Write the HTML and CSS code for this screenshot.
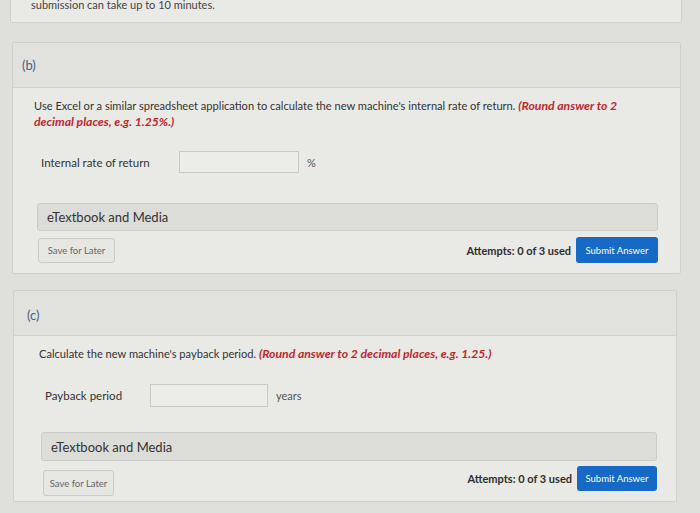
FILE: index.html
```html
<!DOCTYPE html>
<html>
<head>
<meta charset="utf-8">
<link rel="stylesheet" href="styles.css">
</head>
<body>
<div class="page">
  <div class="card card-top">
    <p class="top-note">submission can take up to 10 minutes.</p>
  </div>

  <div class="card card-b">
    <div class="card-head"><span class="part">(b)</span></div>
    <div class="card-body">
      <p class="question">Use Excel or a similar spreadsheet application to calculate the new machine's internal rate of return. <em class="hint">(Round answer to 2 decimal places, e.g. 1.25%.)</em></p>
      <div class="answer-row">
        <span class="label label-b">Internal rate of return</span>
        <span class="input input-b"></span>
        <span class="unit">%</span>
      </div>
      <div class="media">eTextbook and Media</div>
      <div class="actions">
        <button class="btn-save">Save for Later</button>
        <div class="submit-group">
          <span class="attempts">Attempts: 0 of 3 used</span>
          <button class="btn-submit">Submit Answer</button>
        </div>
      </div>
    </div>
  </div>

  <div class="card card-c">
    <div class="card-head"><span class="part">(c)</span></div>
    <div class="card-body">
      <p class="question">Calculate the new machine's payback period. <em class="hint">(Round answer to 2 decimal places, e.g. 1.25.)</em></p>
      <div class="answer-row">
        <span class="label label-c">Payback period</span>
        <span class="input input-c"></span>
        <span class="unit">years</span>
      </div>
      <div class="media">eTextbook and Media</div>
      <div class="actions">
        <button class="btn-save">Save for Later</button>
        <div class="submit-group">
          <span class="attempts">Attempts: 0 of 3 used</span>
          <button class="btn-submit">Submit Answer</button>
        </div>
      </div>
    </div>
  </div>
</div>
</body>
</html>
```

FILE: styles.css
```css
html, body {
  margin: 0;
  padding: 0;
}
body {
  background: #dfdfdb;
  font-family: Lato, "Open Sans", sans-serif;
  color: #3a3a3a;
  width: 700px;
  height: 513px;
  overflow: hidden;
}
.page {
  display: flex;
  flex-direction: column;
}
.card {
  background: #e9e9e5;
  border: 1px solid #cfcfcb;
  border-radius: 2px;
  box-sizing: border-box;
}
.card-top {
  margin: -4px 18px 0 10px;
  height: 27px;
  padding: 1px 0 0 20px;
  display: flex;
  align-items: flex-start;
}
.top-note {
  margin: 0;
  font-size: 11px;
  line-height: 14px;
  color: #444;
}
.card-b {
  margin: 19px 19px 0 12px;
}
.card-c {
  margin: 16px 23px 0 13px;
}
.card-head {
  background: #e1e1dd;
  border-bottom: 1px solid #d2d2ce;
  height: 45px;
  box-sizing: border-box;
  display: flex;
  align-items: center;
}
.card-b .card-head { padding-left: 9px; }
.card-c .card-head { padding-left: 13px; padding-top: 4px; }
.part {
  font-size: 13px;
  color: #4a5f86;
}
.card-body {
  display: flex;
  flex-direction: column;
}
.card-b .card-body { padding: 10px 22px 10px 21px; }
.card-c .card-body { padding: 10px 19px 5px 25px; }
.question {
  margin: 0;
  font-size: 11.1px;
  line-height: 16px;
  color: #333;
  max-width: 600px;
}
.hint {
  color: #c2262d;
  font-weight: 700;
  font-style: italic;
  font-size: 12.2px;
}
.answer-row {
  display: flex;
  align-items: center;
}
.card-b .answer-row { margin: 21px 0 0 7px; }
.card-c .answer-row { margin: 22px 0 0 6px; }
.label {
  font-size: 11.5px;
  color: #333;
}
.label-b { width: 138px; }
.label-c { width: 105px; }
.input {
  display: block;
  height: 22px;
  background: #ecece8;
  border: 1px solid #c9c9c5;
  box-sizing: border-box;
}
.input-b { width: 120px; }
.input-c { width: 118px; height: 23px; }
.unit {
  font-size: 11px;
  color: #555;
  margin-left: 8px;
}
.media {
  background: #dcdcd8;
  border: 1px solid #cbcbc7;
  border-radius: 3px;
  height: 28px;
  box-sizing: border-box;
  display: flex;
  align-items: center;
  padding-left: 9px;
  font-size: 13px;
  color: #333;
}
.card-b .media { margin: 30px 0 0 3px; }
.card-c .media { margin: 25px 0 0 2px; height: 29px; }
.actions {
  display: flex;
  justify-content: space-between;
  align-items: center;
  margin-top: 6px;
}
.card-b .actions { margin-left: 4px; }
.card-c .actions { margin-left: 4px; margin-top: 5px; align-items: flex-start; }
.btn-save {
  font-family: inherit;
  font-size: 9.5px;
  color: #666;
  background: #e6e6e2;
  border: 1px solid #cacac6;
  border-radius: 3px;
  height: 25px;
  width: 77px;
  padding: 0;
}
.card-c .btn-save { width: 71px; height: 26px; margin-top: 4px; }
.submit-group {
  display: flex;
  align-items: center;
  gap: 5px;
}
.attempts {
  font-size: 11px;
  color: #2e2e2e;
  font-weight: 700;
}
.btn-submit {
  font-family: inherit;
  font-size: 9.5px;
  color: #fff;
  background: #1769c6;
  border: none;
  border-radius: 3px;
  height: 26px;
  width: 82px;
  padding: 0;
}
.card-c .btn-submit { width: 80px; height: 25px; }
```
